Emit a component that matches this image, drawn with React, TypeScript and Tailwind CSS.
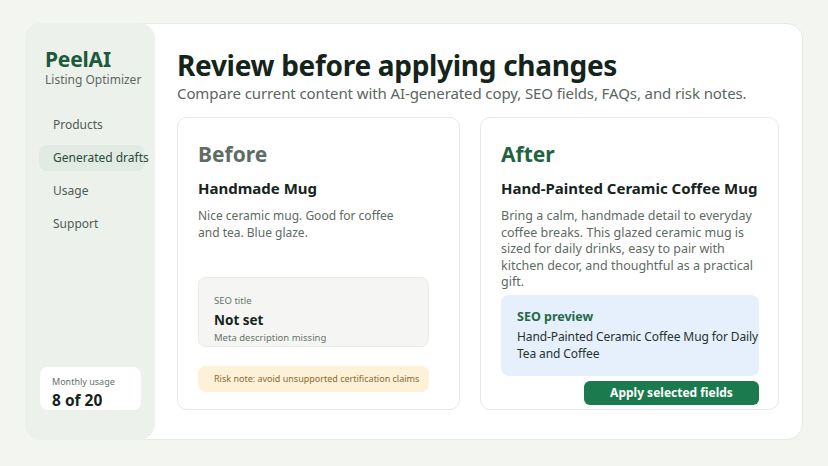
import React from "react";

export default function App() {
  return (
    <div
      className="w-[828px] h-[466px] bg-[#f3f5f1] pt-[23px] pl-[25px] pr-[25px] pb-[26px]"
      style={{ fontFamily: '"Noto Sans", "Open Sans", sans-serif' }}
    >
      <div className="flex h-[417px] rounded-[16px] bg-white border border-[#e6ebe5]">
        {/* Sidebar */}
        <aside className="w-[130px] -ml-px -my-px h-[417px] shrink-0 rounded-[16px] bg-[#edf1ec] flex flex-col pl-[14px] pr-[10px] pt-[23px] pb-[30px]">
          <div className="pl-[6px] whitespace-nowrap">
            <div className="text-[21px] leading-[26px] font-bold text-[#1e5a3c] tracking-[-0.2px]">PeelAI</div>
            <div className="text-[12px] leading-[16px] text-[#5d6862]">Listing Optimizer</div>
          </div>
          <nav className="mt-[24px] flex flex-col gap-[7px] text-[12px] text-[#4f5c55] whitespace-nowrap">
            <div className="h-[26px] flex items-center px-[14px]">Products</div>
            <div className="h-[26px] flex items-center px-[14px] rounded-[8px] bg-[#e2ebe3] text-[#2c4a3a]">Generated drafts</div>
            <div className="h-[26px] flex items-center px-[14px]">Usage</div>
            <div className="h-[26px] flex items-center px-[14px]">Support</div>
          </nav>
          <div className="mt-auto ml-px w-[101px] h-[43px] rounded-[8px] bg-white pl-[12px] pt-[9px] whitespace-nowrap overflow-hidden">
            <div className="text-[9px] leading-[12px] text-[#66716b]">Monthly usage</div>
            <div className="text-[15.5px] leading-[20px] font-bold text-[#16241c] mt-[2px]">8 of 20</div>
          </div>
        </aside>

        {/* Main */}
        <main className="flex-1 pl-[22px] pr-[22px] pt-[24px]">
          <h1 className="text-[28px] leading-[34px] font-bold text-[#15241b] tracking-[-0.3px] whitespace-nowrap">Review before applying changes</h1>
          <p className="text-[15px] leading-[20px] text-[#5b6660] mt-[1px] tracking-[-0.1px] whitespace-nowrap">
            Compare current content with AI-generated copy, SEO fields, FAQs, and risk notes.
          </p>

          <div className="mt-[14px] flex gap-[20px]">
            {/* Before */}
            <section className="w-[283px] h-[293px] rounded-[10px] border border-[#e6eae5] px-[20px] pt-[22px]">
              <div className="text-[21px] leading-[28px] font-bold text-[#5e6c63]">Before</div>
              <div className="mt-[10px] text-[15px] leading-[20px] font-bold text-[#16241c]">Handmade Mug</div>
              <p className="mt-[10px] w-[205px] text-[12px] leading-[16.5px] text-[#5e6a63]">
                Nice ceramic mug. Good for coffee and tea. Blue glaze.
              </p>
              <div className="mt-[36px] w-[231px] h-[70px] rounded-[8px] bg-[#f5f6f3] border border-[#e9ece7] pl-[15px] pt-[17px] whitespace-nowrap">
                <div className="text-[9.5px] leading-[12px] text-[#66716b]">SEO title</div>
                <div className="mt-[4px] text-[13.5px] leading-[18px] font-bold text-[#16241c]">Not set</div>
                <div className="mt-[2px] text-[9.5px] leading-[13px] text-[#66716b]">Meta description missing</div>
              </div>
              <div className="mt-[19px] w-[231px] h-[26px] rounded-[8px] bg-[#fdf1d8] pl-[16px] flex items-center text-[9px] text-[#8c6a33] whitespace-nowrap">
                Risk note: avoid unsupported certification claims
              </div>
            </section>

            {/* After */}
            <section className="w-[299px] h-[293px] rounded-[10px] border border-[#e6eae5] pl-[20px] pr-[19px] pt-[22px]">
              <div className="text-[21px] leading-[28px] font-bold text-[#1f6442]">After</div>
              <div className="mt-[10px] text-[15px] leading-[20px] font-bold text-[#16241c] whitespace-nowrap">Hand-Painted Ceramic Coffee Mug</div>
              <p className="mt-[10px] text-[12.5px] leading-[16.5px] text-[#5e6a63]">
                Bring a calm, handmade detail to everyday coffee breaks. This glazed ceramic mug is sized for daily drinks, easy to pair with kitchen decor, and thoughtful as a practical gift.
              </p>
              <div className="mt-[4px] w-[258px] h-[81px] rounded-[8px] bg-[#e6effc] pl-[16px] pt-[13px]">
                <div className="text-[12.5px] leading-[18px] font-bold text-[#1f6b47]">SEO preview</div>
                <div className="mt-[2px] w-[250px] text-[12px] leading-[17px] tracking-[-0.1px] text-[#26332c]">
                  Hand-Painted Ceramic Coffee Mug for Daily Tea and Coffee
                </div>
              </div>
              <div className="flex justify-end w-[258px] mt-[5px]">
                <button className="w-[175px] h-[24px] rounded-[6px] bg-[#1b7a4e] text-white text-[12px] font-bold leading-[24px]">
                  Apply selected fields
                </button>
              </div>
            </section>
          </div>
        </main>
      </div>
    </div>
  );
}
